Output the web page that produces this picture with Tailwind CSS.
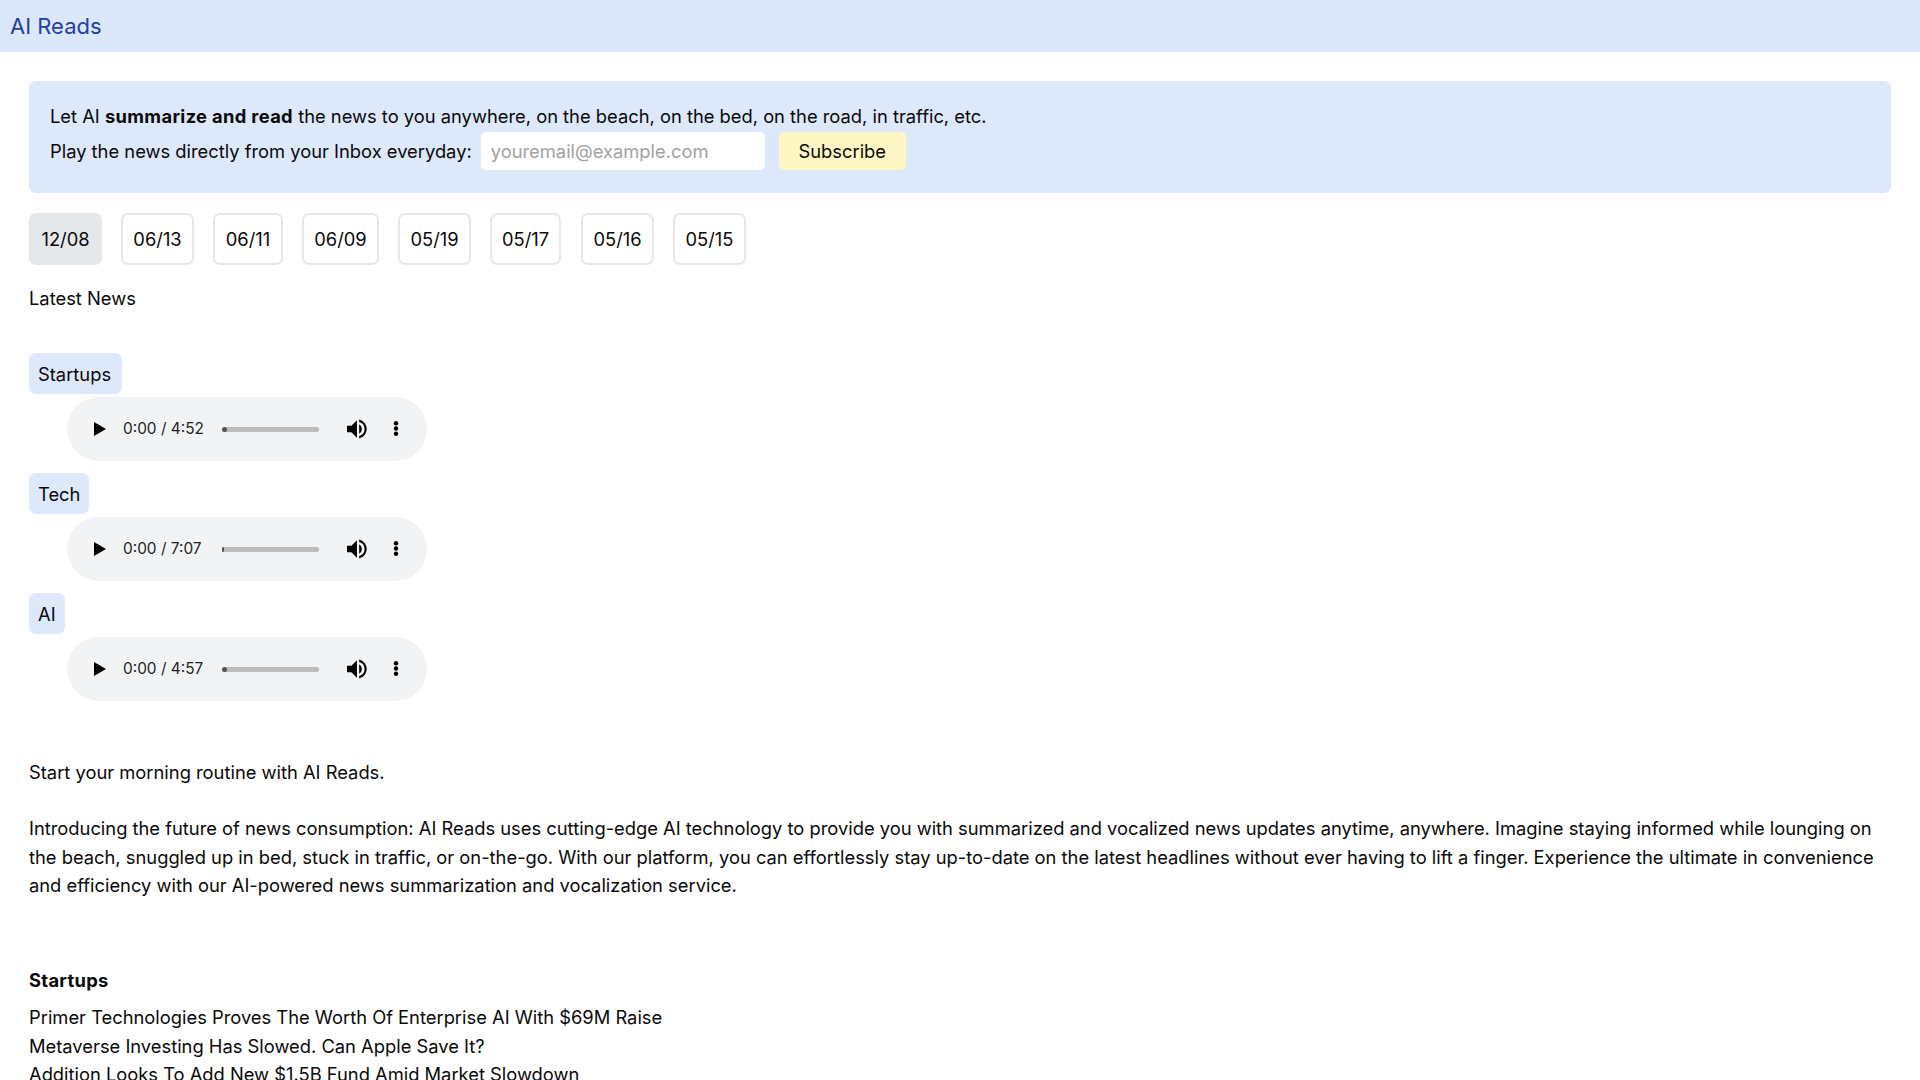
<!DOCTYPE html>
<html lang="en">
<head>
<meta charset="utf-8">
<title>AI Reads</title>
<script src="https://cdn.jsdelivr.net/npm/@tailwindcss/browser@4"></script>
</head>
<body class="font-['Inter',sans-serif] text-[18.33px] leading-[28px] text-[#0a0a0a] bg-white overflow-hidden h-[1080px]">
<header class="h-[52px] bg-[#dbe7fb] flex items-center px-[10px]">
  <span class="text-[22px] text-[#2a3f9d]">AI Reads</span>
</header>
<main class="px-[29px] pt-[29px]">
  <section class="h-[112px] bg-[#dde8fb] rounded-[7px] px-[21px] pt-[21px]">
    <p class="h-[28px]">Let AI <b class="font-bold tracking-[0.34px]">summarize and read</b> the news to you anywhere, on the beach, on the bed, on the road, in traffic, etc.</p>
    <div class="flex items-center mt-[2px] h-[38px]">
      <span>Play the news directly from your Inbox everyday:</span>
      <input class="ml-[9px] w-[284px] h-[38px] bg-white rounded-[5px] px-[10px] text-[18.33px] placeholder:text-[#a3a3a3]" placeholder="youremail@example.com">
      <button class="ml-[14px] w-[127px] h-[38px] bg-[#fef7c3] rounded-[5px] text-[18.33px]">Subscribe</button>
    </div>
  </section>
  <nav class="flex mt-[20px] gap-[19px]">
    <span class="h-[52px] w-[73px] rounded-[7px] bg-[#e5e7eb] flex items-center justify-center">12/08</span>
    <span class="h-[52px] w-[73px] rounded-[7px] border-2 border-[#e5e7eb] flex items-center justify-center">06/13</span>
    <span class="h-[52px] w-[70px] rounded-[7px] border-2 border-[#e5e7eb] flex items-center justify-center">06/11</span>
    <span class="h-[52px] w-[77px] rounded-[7px] border-2 border-[#e5e7eb] flex items-center justify-center">06/09</span>
    <span class="h-[52px] w-[73px] rounded-[7px] border-2 border-[#e5e7eb] flex items-center justify-center">05/19</span>
    <span class="h-[52px] w-[71px] rounded-[7px] border-2 border-[#e5e7eb] flex items-center justify-center">05/17</span>
    <span class="h-[52px] w-[73px] rounded-[7px] border-2 border-[#e5e7eb] flex items-center justify-center ml-[1px]">05/16</span>
    <span class="h-[52px] w-[73px] rounded-[7px] border-2 border-[#e5e7eb] flex items-center justify-center">05/15</span>
  </nav>
  <p class="mt-[19px]">Latest News</p>
  <div class="mt-[41px] flex flex-col items-start">
    <span class="h-[41px] pl-[9px] pr-[11px] rounded-[7px] bg-[#dde8fb] flex items-center">Startups</span>
    <div class="mt-[3px] ml-[38px] w-[360px] h-[64px] rounded-[32px] bg-[#f1f3f4] flex items-center pl-[26px] relative">
      <svg width="14" height="16" viewBox="0 0 14 16"><path d="M1 1v14l12-7z" fill="#000"/></svg>
      <span class="ml-[16px] text-[15.4px] leading-none text-[#1f1f1f]">0:00 / 4:52</span>
      <div class="absolute left-[155px] top-[29.5px] w-[97px] h-[5px] rounded-full bg-[#bcbcbc]"><div class="w-[5px] h-[5px] rounded-full bg-[#555]"></div></div>
      <svg class="absolute left-[280px] top-[22px]" width="21" height="20" viewBox="0 0 19 18"><path d="M0 6v6h4l5 5V1L4 6z M11 4.8v8.4a4.8 4.8 0 0 0 0-8.4z M11 0.5v2.2a6.5 6.5 0 0 1 0 12.6v2.2a8.7 8.7 0 0 0 0-17z" fill="#000"/></svg>
      <svg class="absolute left-[326px] top-[23px]" width="6" height="18" viewBox="0 0 6 18"><circle cx="3" cy="3.3" r="2.2"/><circle cx="3" cy="8.5" r="2.2"/><circle cx="3" cy="13.7" r="2.2"/></svg>
    </div>
    <span class="mt-[12px] h-[41px] px-[9px] rounded-[7px] bg-[#dde8fb] flex items-center">Tech</span>
    <div class="mt-[3px] ml-[38px] w-[360px] h-[64px] rounded-[32px] bg-[#f1f3f4] flex items-center pl-[26px] relative">
      <svg width="14" height="16" viewBox="0 0 14 16"><path d="M1 1v14l12-7z" fill="#000"/></svg>
      <span class="ml-[16px] text-[15.4px] leading-none text-[#1f1f1f]">0:00 / 7:07</span>
      <div class="absolute left-[155px] top-[29.5px] w-[97px] h-[5px] rounded-full bg-[#bcbcbc]"><div class="w-[2px] h-[5px] rounded-full bg-[#555]"></div></div>
      <svg class="absolute left-[280px] top-[22px]" width="21" height="20" viewBox="0 0 19 18"><path d="M0 6v6h4l5 5V1L4 6z M11 4.8v8.4a4.8 4.8 0 0 0 0-8.4z M11 0.5v2.2a6.5 6.5 0 0 1 0 12.6v2.2a8.7 8.7 0 0 0 0-17z" fill="#000"/></svg>
      <svg class="absolute left-[326px] top-[23px]" width="6" height="18" viewBox="0 0 6 18"><circle cx="3" cy="3.3" r="2.2"/><circle cx="3" cy="8.5" r="2.2"/><circle cx="3" cy="13.7" r="2.2"/></svg>
    </div>
    <span class="mt-[12px] h-[41px] px-[9px] rounded-[7px] bg-[#dde8fb] flex items-center">AI</span>
    <div class="mt-[3px] ml-[38px] w-[360px] h-[64px] rounded-[32px] bg-[#f1f3f4] flex items-center pl-[26px] relative">
      <svg width="14" height="16" viewBox="0 0 14 16"><path d="M1 1v14l12-7z" fill="#000"/></svg>
      <span class="ml-[16px] text-[15.4px] leading-none text-[#1f1f1f]">0:00 / 4:57</span>
      <div class="absolute left-[155px] top-[29.5px] w-[97px] h-[5px] rounded-full bg-[#bcbcbc]"><div class="w-[5px] h-[5px] rounded-full bg-[#555]"></div></div>
      <svg class="absolute left-[280px] top-[22px]" width="21" height="20" viewBox="0 0 19 18"><path d="M0 6v6h4l5 5V1L4 6z M11 4.8v8.4a4.8 4.8 0 0 0 0-8.4z M11 0.5v2.2a6.5 6.5 0 0 1 0 12.6v2.2a8.7 8.7 0 0 0 0-17z" fill="#000"/></svg>
      <svg class="absolute left-[326px] top-[23px]" width="6" height="18" viewBox="0 0 6 18"><circle cx="3" cy="3.3" r="2.2"/><circle cx="3" cy="8.5" r="2.2"/><circle cx="3" cy="13.7" r="2.2"/></svg>
    </div>
  </div>
  <p class="mt-[57px]">Start your morning routine with AI Reads.</p>
  <p class="mt-[28px] leading-[28.5px]">Introducing the future of news consumption: AI Reads uses cutting-edge AI technology to provide you with summarized and vocalized news updates anytime, anywhere. Imagine staying informed while lounging on the beach, snuggled up in bed, stuck in traffic, or on-the-go. With our platform, you can effortlessly stay up-to-date on the latest headlines without ever having to lift a finger. Experience the ultimate in convenience and efficiency with our AI-powered news summarization and vocalization service.</p>
  <h2 class="mt-[66px] font-bold tracking-[0.3px]">Startups</h2>
  <ul class="mt-[9.5px] leading-[28.5px]">
    <li>Primer Technologies Proves The Worth Of Enterprise AI With $69M Raise</li>
    <li>Metaverse Investing Has Slowed. Can Apple Save It?</li>
    <li>Addition Looks To Add New $1.5B Fund Amid Market Slowdown</li>
  </ul>
</main>
</body>
</html>
